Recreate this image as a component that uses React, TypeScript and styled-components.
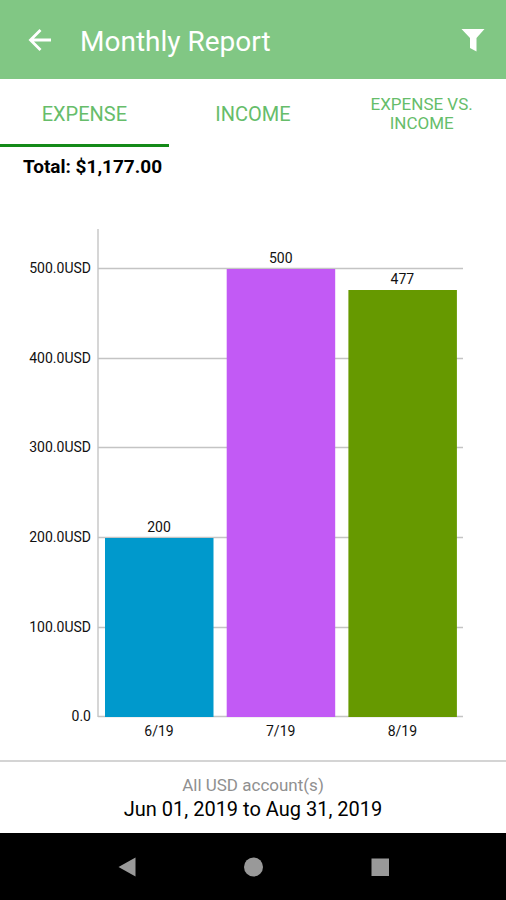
import React, { useState } from "react";
import styled, { createGlobalStyle } from "styled-components";

const GlobalStyle = createGlobalStyle`
  * { box-sizing: border-box; }
  body {
    margin: 0;
    background: #fff;
    font-family: Roboto, "Liberation Sans", sans-serif;
  }
  button {
    border: 0;
    padding: 0;
    background: none;
    font: inherit;
    cursor: pointer;
  }
`;

const Screen = styled.div`
  display: flex;
  flex-direction: column;
  min-height: 100vh;
  color: #000;
`;

const Header = styled.header`
  display: flex;
  align-items: center;
  height: 79px;
  padding: 0 20px 0 28px;
  background: #81c784;
  color: #fff;
`;

const Title = styled.h1`
  flex: 1;
  margin: 0;
  padding: 4px 0 0 28px;
  font-size: 28px;
  font-weight: 400;
  line-height: 32px;
`;

const IconButton = styled.button`
  display: flex;
  color: #fff;
`;

const Tabs = styled.div`
  display: grid;
  grid-template-columns: repeat(3, 1fr);
  height: 68px;
`;

const Tab = styled.button<{ $small?: boolean }>`
  padding: 2px 24px 0;
  border-top: 3px solid transparent;
  border-bottom: 3px solid transparent;
  color: #66bd6a;
  font-size: ${(p) => (p.$small ? 17 : 20)}px;
  line-height: ${(p) => (p.$small ? 19 : 22)}px;
  text-transform: uppercase;

  &[aria-selected="true"] {
    border-bottom-color: #148a18;
  }
`;

const Total = styled.p`
  margin: 0;
  padding: 8px 23px 0;
  font-size: 19px;
  font-weight: 700;
  line-height: 24px;
`;

const Chart = styled.svg`
  display: block;
  width: 100%;
  height: auto;
  font-size: 14px;
  fill: #111;
`;

const Footer = styled.footer`
  flex: 1;
  padding: 11px 16px;
  border-top: 2px solid #d4d4d4;
  text-align: center;
`;

const Accounts = styled.p`
  margin: 0;
  color: #909090;
  font-size: 17px;
  line-height: 24px;
`;

const Period = styled.p`
  margin: 0;
  font-size: 20px;
  line-height: 24px;
`;

const SystemNav = styled.nav`
  display: flex;
  justify-content: center;
  gap: 102px;
  height: 67px;
  background: #000;
`;

const NavButton = styled.button`
  display: flex;
  align-items: center;
  color: #999;
`;

const TABS = [
  { label: "Expense" },
  { label: "Income" },
  { label: "Expense vs. Income", small: true },
];

const BARS = [
  { label: "6/19", value: 200, color: "#0099cc" },
  { label: "7/19", value: 500, color: "#c25af5" },
  { label: "8/19", value: 477, color: "#669900" },
];

const TICKS = [0, 100, 200, 300, 400, 500];
const BASE = 538;
const yOf = (value: number) => Math.ceil(BASE - value * 0.897);

function BarChart() {
  return (
    <Chart viewBox="0 0 506 581" role="img" aria-label="Expense by month in USD">
      <path d="M98 50V538" stroke="#c8c8c8" strokeWidth="1.5" />
      {TICKS.map((tick) => (
        <g key={tick}>
          <path d={`M98 ${yOf(tick) - 0.5}H463`} stroke="#c4c4c4" strokeWidth="1.3" />
          <text x="91" y={yOf(tick) + 4} textAnchor="end">
            {tick === 0 ? "0.0" : `${tick}.0USD`}
          </text>
        </g>
      ))}
      {BARS.map((bar, i) => {
        const left = 105 + i * 121.7;
        const top = yOf(bar.value);
        return (
          <g key={bar.label}>
            <rect x={left} y={top} width="108.5" height={BASE - top} fill={bar.color} />
            <text x={left + 54} y={top - 6} textAnchor="middle">{bar.value}</text>
            <text x={left + 54} y={BASE + 19} textAnchor="middle">{bar.label}</text>
          </g>
        );
      })}
    </Chart>
  );
}

export default function App() {
  const [selected, setSelected] = useState(0);
  return (
    <Screen>
      <GlobalStyle />
      <Header>
        <IconButton aria-label="Back">
          <svg width="24" height="24" viewBox="0 0 24 24" fill="none" stroke="currentColor" strokeWidth="2.8">
            <path d="M23 12H3M12.5 2L2.5 12L12.5 22" />
          </svg>
        </IconButton>
        <Title>Monthly Report</Title>
        <IconButton aria-label="Filter">
          <svg width="26" height="26" viewBox="0 0 26 26" fill="currentColor">
            <path d="M1.5 2H24.5L16.5 11V24.5L10 21V11Z" />
          </svg>
        </IconButton>
      </Header>
      <Tabs role="tablist">
        {TABS.map((tab, i) => (
          <Tab
            key={tab.label}
            role="tab"
            aria-selected={i === selected}
            $small={tab.small}
            onClick={() => setSelected(i)}
          >
            {tab.label}
          </Tab>
        ))}
      </Tabs>
      <Total>Total: $1,177.00</Total>
      <BarChart />
      <Footer>
        <Accounts>All USD account(s)</Accounts>
        <Period>Jun 01, 2019 to Aug 31, 2019</Period>
      </Footer>
      <SystemNav aria-label="System">
        <NavButton aria-label="Back">
          <svg width="24" height="24" viewBox="0 0 24 24" fill="currentColor">
            <path d="M3.5 12L20.5 2.5V21.5Z" />
          </svg>
        </NavButton>
        <NavButton aria-label="Home">
          <svg width="24" height="24" viewBox="0 0 24 24" fill="currentColor">
            <circle cx="12.5" cy="12" r="9.5" />
          </svg>
        </NavButton>
        <NavButton aria-label="Recent apps">
          <svg width="24" height="24" viewBox="0 0 24 24" fill="currentColor">
            <rect x="4.5" y="3.5" width="17.5" height="17.5" />
          </svg>
        </NavButton>
      </SystemNav>
    </Screen>
  );
}
